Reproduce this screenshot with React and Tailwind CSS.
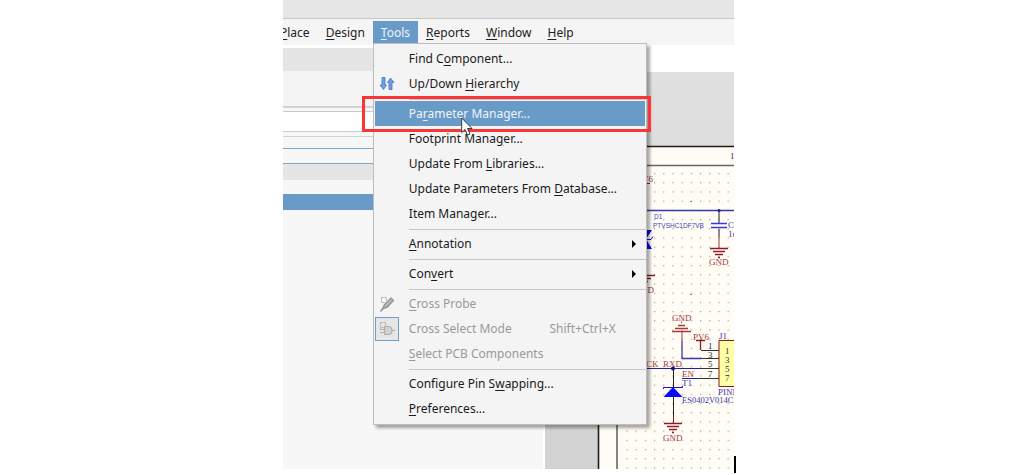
import React from "react";

function Label({ text }) {
  const [before, key, after] = text.split("_");
  if (key === undefined) return <span>{text}</span>;
  return (
    <span>
      {before}
      <span className="underline underline-offset-2">{key}</span>
      {after}
    </span>
  );
}

function ArrowsIcon() {
  return (
    <svg className="h-4 w-4" viewBox="0 0 16 16" fill="#6f9fe6" stroke="#4775bd" strokeWidth="0.8">
      <path d="M3 1.500h3v7.500h1.500L4.500 13.500 1 9h2z" />
      <path d="M10 13.500h3V6.500h2L11.500 2 8.500 6.500H10z" />
    </svg>
  );
}

function ProbeIcon() {
  return (
    <svg className="h-4 w-4" viewBox="0 0 16 16" fill="none">
      <rect x="2.500" y="1.500" width="5" height="5" stroke="#b0b0b0" strokeDasharray="2 1" />
      <path d="M12 2 14.500 4.500 8 11.500 4.500 12.500 1.500 15.500 4 11.500 5.500 8.500z" fill="#a8a8a8" stroke="#949494" strokeWidth="1.200" />
      <path d="M6.500 10 12.500 3.500" stroke="#d2d2d2" />
    </svg>
  );
}

function GateIcon() {
  return (
    <svg className="h-4 w-4" viewBox="0 0 16 16" fill="none" stroke="#adadad">
      <rect x="1.500" y="1.500" width="5" height="5" strokeDasharray="2 1" />
      <path d="M5.500 5.500h3.500c5.300 0 5.300 8 0 8H5.500z" fill="#d2d2d2" strokeWidth="1.200" />
      <path d="M1 8.500h4.500M1 11.500h4.500M13 9.500H16M1.500 7v2" />
    </svg>
  );
}

const menuItems = [
  { text: "Find C_o_mponent..." },
  { text: "Up/Down _H_ierarchy", icon: <ArrowsIcon /> },
  null,
  { text: "Pa_r_ameter Manager...", active: true },
  { text: "Footprint Mana_g_er..." },
  { text: "Update From _L_ibraries..." },
  { text: "Update Parameters From _D_atabase..." },
  { text: "Item Manager..." },
  null,
  { text: "_A_nnotation", sub: true },
  null,
  { text: "Con_v_ert", sub: true },
  null,
  { text: "_C_ross Probe", icon: <ProbeIcon />, disabled: true },
  { text: "Cross Select Mode", icon: <GateIcon />, disabled: true, checked: true, shortcut: "Shift+Ctrl+X" },
  { text: "_S_elect PCB Components", disabled: true },
  null,
  { text: "Configure Pin S_w_apping..." },
  { text: "_P_references..." },
];

function MenuItem({ item }) {
  return (
    <li className="relative mr-px">
      <button
        type="button"
        disabled={item.disabled}
        className={
          "flex h-[25px] w-full items-center text-left " +
          (item.active ? "bg-[#699bc9] text-[#eef4fa]" : item.disabled ? "text-[#999]" : "text-[#1a1a1a]")
        }
      >
        <span className="flex w-[34px] shrink-0 items-center">
          <span
            className={
              "flex h-6 w-6 items-center justify-center border " +
              (item.checked ? "border-[#6fa0cd] bg-[#e6e6e6]" : "border-transparent")
            }
          >
            {item.icon}
          </span>
        </span>
        <Label text={item.text} />
        {item.shortcut && <span className="ml-auto pr-[29px]">{item.shortcut}</span>}
        {item.sub && (
          <svg className="mr-[9px] ml-auto h-2 w-1" viewBox="0 0 4 8">
            <path d="M0 0 4 4 0 8z" fill="#000" />
          </svg>
        )}
      </button>
      {item.active && (
        <>
          <span className="pointer-events-none absolute -top-[5px] -right-[6px] -bottom-[6px] -left-[13px] border-[3px] border-[#fb3536]" />
          <svg className="absolute top-4 left-[86px] h-[19px] w-3" viewBox="0 0 12 19">
            <path d="M.7 1v14.500l3.300-3 2.500 5.500 2.500-1-2.500-5.500h4.500z" fill="#fff" stroke="#333a4a" />
          </svg>
        </>
      )}
    </li>
  );
}

function ToolsMenu() {
  return (
    <ul className="absolute top-full left-0 z-10 w-[274px] border border-[#bdbdbd] bg-[#f4f4f4] pt-[2px] pb-[3px] pl-px shadow-[3px_3px_3px_rgba(0,0,0,0.35)]">
      {menuItems.map((item, i) =>
        item ? (
          <MenuItem key={i} item={item} />
        ) : (
          <li key={i} role="separator" className="flex h-[5px] items-end pb-px pl-[34px]">
            <span className="h-px w-full bg-[#c6c6c6]" />
          </li>
        )
      )}
    </ul>
  );
}

function Ground({ x, y }) {
  return (
    <path d={`M${x - 9} ${y}h18M${x - 6} ${y + 3}h12M${x - 4} ${y + 6}h8M${x - 1} ${y + 9}h2`} stroke="#8c1c22" strokeWidth="1.300" />
  );
}

function Schematic() {
  return (
    <svg className="block h-[397px] w-[189px]" viewBox="545 72 189 397" fill="none" fontFamily="Liberation Serif, serif" fontSize="9">
      <defs>
        <pattern id="grid" x="654" y="173" width="9.200" height="9.200" patternUnits="userSpaceOnUse">
          <rect width="1.200" height="1.200" fill="#a09c96" />
        </pattern>
        <linearGradient id="desk" x1="0" y1="0" x2="0" y2="1">
          <stop offset="0" stopColor="#e0e0e0" />
          <stop offset="1" stopColor="#d2d2d2" />
        </linearGradient>
      </defs>
      <rect x="545" y="72" width="189" height="397" fill="url(#desk)" />
      <rect x="598" y="146" width="136" height="323" fill="#fffcf6" />
      <path d="M734 146.500H598.500V469" stroke="#1c1c1c" strokeWidth="1.600" />
      <path d="M734 165.500H617V469" stroke="#666" strokeWidth="1.600" />
      <rect x="624" y="172" width="110" height="297" fill="url(#grid)" />
      <path d="M690 201h2v1h-2zM690 294h2v1h-2z" fill="#8a8478" />
      <text x="730" y="159" fill="#333">1</text>

      <path d="M647 210.500H734" stroke="#3a3aac" strokeWidth="1.300" />
      <g fill="#a8383c">
        <text x="642" y="182">V6</text>
        <text x="641" y="293">ND</text>
        <text x="672" y="321">GND</text>
        <text x="709" y="265">GND</text>
        <text x="663" y="441">GND</text>
        <text x="693" y="340">PV6</text>
        <text x="646" y="367">CK</text>
        <text x="663" y="367">RXD</text>
        <text x="682" y="377">EN</text>
      </g>
      <path d="M644 183.500h6" stroke="#8c1c22" />
      <g fill="#4444b0" fontFamily="Liberation Sans, sans-serif" fontSize="6.500">
        <text x="654" y="219">D1</text>
        <text x="653" y="228">PTVSHC1DF7VB</text>
      </g>
      <path d="M640 230h12l-6 9 6 10h-12z" fill="#0a0af5" />
      <path d="M644 239.500h7l2-3" stroke="#0a0af5" />
      <path d="M646 275.500h9M646 278.500h5M646 281.500h2" stroke="#8c1c22" strokeWidth="1.300" />

      <path d="M719 210v13M719 229v8" stroke="#666" strokeWidth="1.500" />
      <path d="M711 223.500h16M711 227.500h16" stroke="#3838e0" strokeWidth="1.300" />
      <path d="M719 237v11" stroke="#a8383c" />
      <circle cx="719" cy="210.500" r="1.500" fill="#22228c" />
      <Ground x={719} y={248.500} />

      <path d="M672 331.500h19M675 328.500h13M678 325.500h7M681 322.500h1" stroke="#a8383c" strokeWidth="1.300" />
      <path d="M682 332v9" stroke="#a8383c" />
      <path d="M682 341v17.500h19" stroke="#3a3aac" strokeWidth="1.300" />
      <path d="M696 340.500h9M700.500 340v10" stroke="#8c1c22" strokeWidth="1.300" />
      <path d="M701 350.500h18M701 358.500h18M700 368.500h19M700 378.500h19" stroke="#333" strokeWidth="1.200" />
      <path d="M647 368.500h54M682 378.500h18" stroke="#22229c" strokeWidth="1.200" />
      <circle cx="673" cy="368.500" r="2" fill="#14147c" />

      <path d="M673.500 368v48" stroke="#222" />
      <path d="M673.500 416v7" stroke="#8c1c22" />
      <path d="M663.500 389v-1.500h19V386" stroke="#1414c8" />
      <path d="M673 387l9.500 10h-19z" fill="#0a0af5" />
      <Ground x={673} y={423.500} />

      <path d="M719 340.500h16v46h-16z" fill="#ffffa6" stroke="#8c1c22" />
      <g fill="#333">
        <text x="708" y="349">1</text>
        <text x="708" y="358">3</text>
        <text x="708" y="367">5</text>
        <text x="708" y="377">7</text>
        <text x="725" y="354">1</text>
        <text x="725" y="363">3</text>
        <text x="725" y="372">5</text>
        <text x="725" y="381">7</text>
      </g>
      <g fill="#3a3aac">
        <text x="719" y="339">J1</text>
        <text x="728" y="228">C</text>
        <text x="728" y="237">1u</text>
        <text x="718" y="395">PINH</text>
        <text x="682" y="386">T1</text>
        <text x="682" y="403" fontSize="8.500">ES0402V014C</text>
      </g>
    </svg>
  );
}

const navItems = ["_P_lace", "_D_esign", "_T_ools", "_R_eports", "_W_indow", "_H_elp"];

export default function App() {
  return (
    <div className="min-h-screen bg-white font-['Noto_Sans','Open_Sans',sans-serif] text-[12px] leading-5">
      <div className="relative mr-[290px] ml-[283px]">
        <div className="overflow-hidden">
          <header className="h-[19px] border-b border-[#c8c8c8] bg-[#e6e6e6]" />
          <nav className="flex h-[26px] items-start bg-[#f5f5f5] pt-[2px] text-[#222]">
            {navItems.map((text) => {
              const open = text === "_T_ools";
              return (
                <div key={text} className="relative first:-ml-[11px]">
                  <button
                    type="button"
                    className={"flex h-[22px] items-center px-2 pt-[2px] " + (open ? "bg-[#699bc9] text-[#eef4fa]" : "")}
                  >
                    <Label text={text} />
                  </button>
                  {open && <ToolsMenu />}
                </div>
              );
            })}
          </nav>
          <main className="flex">
            <aside className="flex w-[260px] shrink-0 flex-col bg-[#f7f7f7]">
              <div className="h-[3px] bg-white" />
              <div className="h-[23px] bg-[#e5e5e5]" />
              <div className="h-[37px] border-b-2 border-[#d2d2d2] bg-[#f3f3f3]" />
              <div className="mt-[3px] h-[21px] border-y border-[#cacaca] bg-white" />
              <div className="mt-1 h-px bg-[#d2d2d2]" />
              <div className="mt-[11px] h-[16px] border-y border-[#7ea6cf]" />
              <div className="h-[16px] bg-[#e5e5e5]" />
              <div className="mt-[14px] h-[16px] bg-[#699bc9]" />
            </aside>
            <section className="flex-1 bg-white">
              <div className="h-[27px]" />
              <div className="flex justify-end">
                <Schematic />
              </div>
            </section>
          </main>
        </div>
        <span className="absolute top-[456px] left-full h-[17px] w-[2px] bg-black" />
      </div>
    </div>
  );
}
